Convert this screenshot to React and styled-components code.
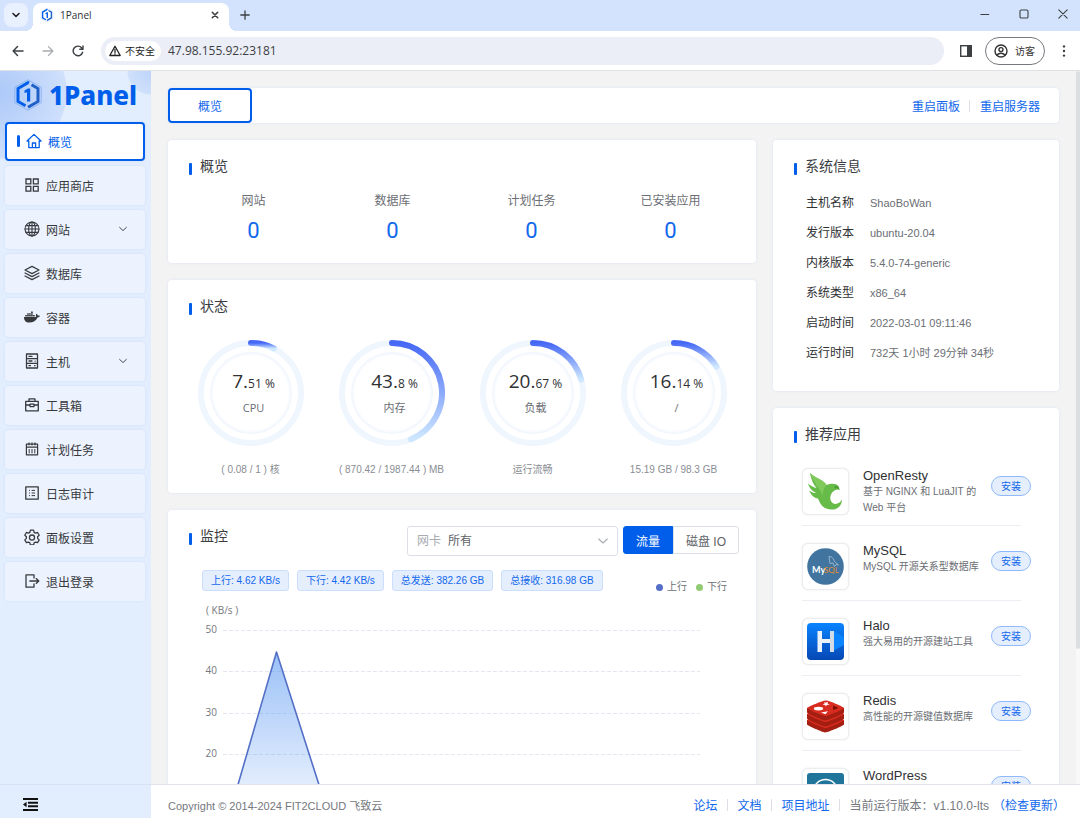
import React, { useState } from 'react';
import styled, { createGlobalStyle, css } from 'styled-components';
import { FaDocker } from 'react-icons/fa';

const GlobalStyle = createGlobalStyle`
    * {
        box-sizing: border-box;
    }
    body {
        margin: 0;
        font-family: "Liberation Sans", "Noto Sans CJK SC", sans-serif;
        font-size: 12px;
        color: #303133;
    }
    button, input, select {
        font-family: inherit;
        margin: 0;
        padding: 0;
        border: none;
        background: none;
    }
    button {
        cursor: pointer;
    }
    a {
        color: #1268ec;
        text-decoration: none;
    }
    h1, h2, h3, p, ul, dl, dd {
        margin: 0;
        padding: 0;
        font-weight: 400;
    }
    ul {
        list-style: none;
    }
    svg {
        display: block;
        flex-shrink: 0;
    }
`;

const line = (width = 1) => ({
    fill: 'none',
    stroke: 'currentColor',
    strokeWidth: width,
    strokeLinecap: 'round',
    strokeLinejoin: 'round',
});

const HomeIcon = () => (
    <svg width="16" height="16" viewBox="0 0 16 16" {...line(1.3)}>
        <path d="M1 8 8 1.4 15 8h-1.8v6.6H2.8V8zM6.4 14.4V10h3.2v4.4" />
    </svg>
);

const GridIcon = () => (
    <svg width="16" height="16" viewBox="0 0 16 16" {...line(1.3)}>
        <path d="M2 2h4.8v4.8H2zM9.4 2h4.8v4.8H9.4zM2 9.4h4.8v4.8H2zM9.4 9.4h4.8v4.8H9.4z" strokeLinejoin="miter" />
    </svg>
);

const GlobeIcon = () => (
    <svg width="16" height="16" viewBox="0 0 16 16" {...line(1.1)}>
        <circle cx="8" cy="8" r="7" />
        <ellipse cx="8" cy="8" rx="3.4" ry="7" />
        <path d="M8 1v14M1 8h14M2 4.6h12M2 11.4h12" />
    </svg>
);

const LayersIcon = () => (
    <svg width="16" height="16" viewBox="0 0 16 16" {...line(1.2)}>
        <path d="M8 1.4 15 5 8 8.6 1 5zM1 8l7 3.6L15 8M1 11l7 3.6 7-3.6" />
    </svg>
);

const HostIcon = () => (
    <svg width="16" height="16" viewBox="0 0 16 16" {...line(1.3)}>
        <path d="M2.5 1h11v14h-11zM2.5 5.7h11M2.5 10.4h11M5 3.4h3M5 8h3M5 12.7h1.5M11 8.1h.2M10.6 12.7h.4" />
    </svg>
);

const ToolboxIcon = () => (
    <svg width="16" height="16" viewBox="0 0 16 16" {...line(1.3)}>
        <path d="M1.7 4.4h12.6v9.4H1.7zM5 4.2V1.9h6v2.3M1.7 8h4.2M10.1 8h4.2M6 7.2h4v2.4H6z" />
    </svg>
);

const CalendarIcon = () => (
    <svg width="16" height="16" viewBox="0 0 16 16" {...line(1.2)}>
        <path d="M2.4 3.2h11.2v10.6H2.4zM2.4 6.2h11.2M5 1.8v2M8 1.8v2M11 1.8v2" />
        <path d="M5.2 8v4.4M8 8v4.4M10.800 8v4.400" strokeWidth="1" strokeLinecap="butt" />
    </svg>
);

const LogIcon = () => (
    <svg width="16" height="16" viewBox="0 0 16 16" {...line(1.3)}>
        <path d="M1.8 1.8h12.4v12.4H1.8z" />
        <path d="M5 5.4h1M7.6 5.4H11M5 8h1M7.6 8H11M5 10.6h1M7.6 10.6H11" strokeWidth="1" strokeLinecap="butt" />
    </svg>
);

const GearIcon = () => (
    <svg width="16" height="16" viewBox="0 0 24 24" {...line(1.9)}>
        <path d="M9.6 1.8h4.8l.8 3.2 2 1.2 3.2-1 2.4 4.2-2.4 2.3v2.4l2.4 2.2-2.4 4.2-3.2-.9-2 1.2-.8 3.1H9.6l-.8-3.1-2-1.2-3.2.9-2.4-4.2 2.4-2.2v-2.4L1.2 9.4l2.4-4.2 3.2 1 2-1.2z" />
        <circle cx="12" cy="12.8" r="3.8" />
    </svg>
);

const LogoutIcon = () => (
    <svg width="16" height="16" viewBox="0 0 16 16" {...line(1.3)}>
        <path d="M10 5V1.8H2v12.4h8V11M5.8 8h9M12.2 5.6 14.8 8l-2.6 2.4" />
    </svg>
);

const ChevronDown = ({ size = 8 }) => (
    <svg width={size} height={size} viewBox="0 0 8 8" {...line(0.9)}>
        <path d="m.6 2.4 3.4 3.2 3.4-3.2" />
    </svg>
);

const PanelMark = ({ size }) => (
    <svg width={size} height={size} viewBox="0 0 32 32">
        <path d="M16 .8 29.200 8.300v15.400L16 31.200 2.800 23.700V8.300z" fill="none" stroke="#7eabf2" strokeWidth=".8" />
        <path d="M19.500 5.700 26 9.500v13L16 28.300" fill="none" stroke="#1f5fc8" strokeWidth="3" />
        <path d="M17 4.200 16 3.700 6 9.500v13l7.500 4.300" fill="none" stroke="#005eeb" strokeWidth="3" />
        <path d="M12.500 11.600 16 9.600h2.200v13h-3.200v-9.400l-2.500.8z" fill="#005eeb" />
    </svg>
);

// ---------- browser window ----------

const Window = styled.div`
    height: 100vh;
    display: flex;
    flex-direction: column;
    overflow: hidden;
    background: #f3f3f4;
`;

const TabStrip = styled.div`
    height: 31px;
    flex-shrink: 0;
    display: flex;
    align-items: center;
    padding: 0 10px 0 4px;
    background: #d3e3fd;
    color: #303336;
`;

const TabMenuButton = styled.button`
    display: grid;
    place-items: center;
    width: 24px;
    height: 24px;
    margin-right: 5px;
    margin-bottom: 2px;
    border-radius: 8px;
    background: #e9f0fe;
    color: #222;
`;

const BrowserTab = styled.div`
    position: relative;
    align-self: flex-end;
    display: flex;
    align-items: center;
    gap: 6px;
    width: 196px;
    height: 28px;
    padding: 0 8px 4px 7px;
    border-radius: 8px 8px 0 0;
    background: #fff;
    font-family: "Open Sans", sans-serif;
    font-size: 10px;

    &::before, &::after {
        content: '';
        position: absolute;
        bottom: 0;
        width: 8px;
        height: 8px;
    }
    &::before {
        left: -8px;
        background: radial-gradient(circle at 0 0, transparent 8px, #fff 8px);
    }
    &::after {
        right: -8px;
        background: radial-gradient(circle at 100% 0, transparent 8px, #fff 8px);
    }
    span {
        flex: 1;
    }
`;

const IconButton = styled.button`
    display: grid;
    place-items: center;
    width: ${({ $width }) => $width || 12}px;
    height: 24px;
    color: ${({ $muted }) => ($muted ? '#a8abaf' : '#3c4043')};
`;

const NewTab = styled(IconButton)`
    margin-left: 10px;
    margin-bottom: 2px;
`;

const WindowControls = styled.div`
    display: flex;
    gap: 25px;
    margin-left: auto;
    padding-bottom: 4px;
`;

const Toolbar = styled.div`
    height: 40px;
    flex-shrink: 0;
    display: flex;
    align-items: center;
    padding: 0 10px;
    background: #fff;
    border-bottom: 1px solid #dfe1e5;
    color: #3c4043;
`;

const NavButtons = styled.div`
    display: flex;
    gap: 14px;
    margin-right: 15px;
`;

const AddressBar = styled.div`
    flex: 1;
    display: flex;
    align-items: center;
    gap: 7px;
    height: 28px;
    padding: 0 4px;
    border-radius: 14px;
    background: #ebeef7;
`;

const SecurityChip = styled.button`
    display: flex;
    align-items: center;
    gap: 4px;
    height: 20px;
    padding: 0 6px 0 4px;
    border-radius: 10px;
    background: #fff;
    color: #222;
    font-size: 10px;
`;

const AddressInput = styled.input`
    flex: 1;
    min-width: 0;
    outline: none;
    color: #3c4043;
    font-family: "Open Sans", sans-serif;
    font-size: 12px;
`;

const ToolbarEnd = styled.div`
    display: flex;
    align-items: center;
    gap: 13px;
    margin-left: 16px;
`;

const GuestButton = styled.button`
    display: flex;
    align-items: center;
    gap: 7px;
    width: 60px;
    height: 28px;
    padding-left: 8px;
    border: 1px solid #75797e;
    border-radius: 14px;
    color: #333;
    font-size: 10px;
`;

// ---------- shell ----------

const Shell = styled.div`
    flex: 1;
    min-height: 0;
    display: flex;
`;

const Sidebar = styled.aside`
    width: 151px;
    flex-shrink: 0;
    display: flex;
    flex-direction: column;
    background:
        radial-gradient(circle at 151px 0, #bdd4fa 0, #cfe0fb 23px, transparent 24px),
        radial-gradient(circle at 0 21px, #adc9f8 0, #cfe0fc 66px, transparent 67px),
        #e2edfd;
`;

const Brand = styled.a`
    display: flex;
    align-items: center;
    gap: 5px;
    height: 51px;
    padding: 0 0 4px 12px;
    color: #005eeb;
    font-family: "Noto Sans", sans-serif;
    font-size: 26px;
    font-weight: 800;
    line-height: 32px;
`;

const Menu = styled.ul`
    display: flex;
    flex-direction: column;
    gap: 5px;
    padding: 0 6px 0 5px;
`;

const MenuButton = styled.button`
    display: flex;
    align-items: center;
    gap: 6px;
    width: 100%;
    height: 39px;
    padding: 0 18px 1px 19px;
    border-radius: 4px;
    background: #ecf3fe;
    box-shadow: 0 0 3px rgba(0, 94, 235, 0.08);
    color: #37393d;
    font-size: 12px;
    text-align: left;

    span {
        flex: 1;
    }

    ${({ $active }) => $active && css`
        padding-left: 10px;
        border: 2px solid #005eeb;
        background: #fff;
        color: #005eeb;

        &::before {
            content: '';
            width: 3px;
            height: 12px;
            border-radius: 2px;
            background: #005eeb;
        }
    `}
`;

const SidebarFoot = styled.div`
    height: 34px;
    margin-top: auto;
    padding: 13px 22px 0;
    border-top: 1px solid #d6e2f5;

    button {
        color: #111;
    }
`;

const Page = styled.div`
    flex: 1;
    min-width: 0;
    display: flex;
    flex-direction: column;
`;

const ScrollArea = styled.div`
    flex: 1;
    min-height: 0;
    display: flex;
`;

const Content = styled.main`
    flex: 1;
    min-width: 0;
    padding: 17px;
    overflow-y: auto;
    scrollbar-width: none;
`;

const ScrollTrack = styled.div`
    width: 4px;
    background: #f9f9fa;

    &::before {
        content: '';
        display: block;
        height: 81%;
        border-radius: 2px;
        background: #dddee0;
    }
`;

const surface = css`
    border-radius: 4px;
    background: #fff;
    box-shadow: 0 0 3px rgba(0, 94, 235, 0.1);
`;

const RouteBar = styled.nav`
    ${surface}
    display: flex;
    align-items: center;
    height: 35px;
    margin-bottom: 17px;
    padding-right: 19px;
`;

const RouteButton = styled.button`
    width: 84px;
    height: 35px;
    margin-right: auto;
    border: 2px solid #005eeb;
    border-radius: 4px;
    background: #fff;
    color: #1268ec;
    font-size: 12px;
`;

const Divider = styled.span`
    width: 1px;
    height: 12px;
    margin: 0 10px 0 9px;
    background: #dcdfe6;
`;

const Columns = styled.div`
    display: grid;
    grid-template-columns: minmax(0, 1fr) 286px;
    gap: 17px;
    align-items: start;
`;

const Column = styled.div`
    display: flex;
    flex-direction: column;
    gap: 17px;
`;

const Card = styled.section`
    ${surface}
    padding-top: 16px;
`;

const CardTitle = styled.h2`
    display: flex;
    align-items: center;
    gap: 8px;
    height: 22px;
    padding-left: 21px;
    color: #3b3d42;
    font-size: 14px;
    line-height: 20px;
    padding-bottom: 2px;

    &::before {
        content: '';
        width: 3px;
        height: 12px;
        margin-top: 5px;
        border-radius: 1px;
        background: #005eeb;
    }
`;

// ---------- overview ----------

const Counters = styled.dl`
    display: grid;
    grid-template-columns: repeat(4, 1fr);
    padding: 13px 16px 12px;
    text-align: center;

    dt {
        color: #6b6e74;
        line-height: 20px;
    }
    dd {
        color: #1268ec;
        font-family: Roboto, sans-serif;
        font-size: 22px;
        line-height: 40px;
    }
`;

// ---------- status ----------

const Gauges = styled.div`
    display: grid;
    grid-template-columns: repeat(4, 1fr);
    justify-items: center;
    padding: 22px 12px 13px;
`;

const Gauge = styled.div`
    display: grid;
    justify-items: center;
    row-gap: 14px;

    > svg, > div {
        grid-area: 1 / 1;
    }
`;

const GaugeText = styled.div`
    align-self: center;
    padding: 0 0 2px 6px;
    color: #6b6e74;
    font-family: "Open Sans", "Noto Sans CJK SC", sans-serif;
    font-size: 11px;
    line-height: 20px;
    text-align: center;

    p {
        color: #303133;
        font-size: 12px;
        line-height: 28px;
    }
    strong {
        font-size: 19px;
        font-weight: 400;
    }
`;

const GaugeNote = styled.p`
    grid-area: 2 / 1;
    color: #8a8d93;
    font-size: 10px;
    line-height: 20px;
`;

// ---------- monitor ----------

const MonitorHeader = styled.div`
    display: flex;
    align-items: flex-start;
    padding-right: 17px;

    h2 {
        margin-right: auto;
    }
`;

const SelectBox = styled.label`
    display: flex;
    align-items: center;
    gap: 7px;
    width: 211px;
    height: 30px;
    margin-right: 5px;
    padding: 0 9px;
    border: 1px solid #dcdfe6;
    border-radius: 3px;
    color: #a8abb2;
    line-height: 28px;

    select {
        flex: 1;
        height: 28px;
        appearance: none;
        outline: none;
        color: #606266;
        font-size: 12px;
        line-height: 28px;
    }
`;

const ModeButton = styled.button`
    height: 28px;
    padding: 0 12px;
    border: 1px solid ${({ $on }) => ($on ? '#005eeb' : '#dcdfe6')};
    border-radius: ${({ $first }) => ($first ? '3px 0 0 3px' : '0 3px 3px 0')};
    background: ${({ $on }) => ($on ? '#005eeb' : '#fff')};
    color: ${({ $on }) => ($on ? '#fff' : '#606266')};
    font-size: 12px;
`;

const TagRow = styled.div`
    display: flex;
    align-items: flex-start;
    gap: 8px;
    padding: 14px 29px 0 34px;
`;

const Tag = styled.span`
    height: 21px;
    padding: 0 8px;
    border: 1px solid #cbdefb;
    border-radius: 3px;
    background: #e5eefd;
    color: #1268ec;
    font-size: 10px;
    line-height: 19px;
    white-space: nowrap;
`;

const Legend = styled.ul`
    display: flex;
    gap: 9px;
    margin: 10px 0 0 auto;
    color: #6b6e74;
    font-size: 10px;
    line-height: 14px;
`;

const LegendItem = styled.li`
    display: flex;
    align-items: center;
    gap: 4px;

    &::before {
        content: '';
        width: 7px;
        height: 7px;
        border-radius: 50%;
        background: ${({ $color }) => $color};
    }
`;

const ChartBox = styled.div`
    padding: 0 54px 16px 34px;

    svg {
        width: 100%;
        height: auto;
    }
    text {
        fill: #75787e;
        font-family: "Open Sans", sans-serif;
        font-size: 10px;
    }
`;

// ---------- side cards ----------

const InfoList = styled.dl`
    display: grid;
    grid-template-columns: 48px 1fr;
    column-gap: 16px;
    padding: 10px 0 23px 33px;
    line-height: 30px;

    dt {
        color: #303133;
    }
    dd {
        color: #6b6e74;
        font-size: 11px;
    }
`;

const AppList = styled.ul`
    padding: 5px 38px 16px 29px;
`;

const AppItem = styled.li`
    display: flex;
    align-items: flex-start;
    padding: 17px 0 10px;
    border-bottom: 1px solid #ebeef2;
`;

const AppLogo = styled.div`
    display: grid;
    place-items: center;
    width: 47px;
    height: 47px;
    border: 1px solid #ecedf0;
    border-radius: 6px;
    box-shadow: 0 0 2px rgba(0, 0, 0, 0.1);
    background: #fff;
`;

const AppText = styled.div`
    flex: 1;
    min-width: 0;
    height: 47px;
    padding: 0 9px 0 14px;

    h3 {
        color: #303133;
        font-size: 13px;
        line-height: 16px;
    }
    p {
        color: #6b6e74;
        font-size: 10px;
        line-height: 16px;
    }
`;

const InstallButton = styled.button`
    width: 40px;
    height: 20px;
    margin: 8px -10px 0 0;
    padding-bottom: 1px;
    border: 1px solid #8fb9f8;
    border-radius: 10px;
    background: #e5eefd;
    color: #1268ec;
    font-size: 10px;
`;

const Footer = styled.footer`
    display: flex;
    align-items: center;
    height: 34px;
    flex-shrink: 0;
    padding: 6px 15px 0 17px;
    border-top: 1px solid #e1e4ea;
    background: #fff;
    color: #75787e;
    white-space: nowrap;

    small {
        margin-right: auto;
        font-size: 11px;
    }
    p {
        margin-right: 4px;
    }
`;

const menu = [
    { name: '概览', icon: <HomeIcon /> },
    { name: '应用商店', icon: <GridIcon /> },
    { name: '网站', icon: <GlobeIcon />, children: true },
    { name: '数据库', icon: <LayersIcon /> },
    { name: '容器', icon: <FaDocker size={16} /> },
    { name: '主机', icon: <HostIcon />, children: true },
    { name: '工具箱', icon: <ToolboxIcon /> },
    { name: '计划任务', icon: <CalendarIcon /> },
    { name: '日志审计', icon: <LogIcon /> },
    { name: '面板设置', icon: <GearIcon /> },
    { name: '退出登录', icon: <LogoutIcon /> },
];

const counters = [
    ['网站', 0],
    ['数据库', 0],
    ['计划任务', 0],
    ['已安装应用', 0],
];

const gauges = [
    { label: 'CPU', value: '7.51', note: '( 0.08 / 1 ) 核' },
    { label: '内存', value: '43.8', note: '( 870.42 / 1987.44 ) MB' },
    { label: '负载', value: '20.67', note: '运行流畅' },
    { label: '/', value: '16.14', note: '15.19 GB / 98.3 GB' },
];

const info = [
    ['主机名称', 'ShaoBoWan'],
    ['发行版本', 'ubuntu-20.04'],
    ['内核版本', '5.4.0-74-generic'],
    ['系统类型', 'x86_64'],
    ['启动时间', '2022-03-01 09:11:46'],
    ['运行时间', '732天 1小时 29分钟 34秒'],
];

const traffic = ['上行: 4.62 KB/s', '下行: 4.42 KB/s', '总发送: 382.26 GB', '总接收: 316.98 GB'];

const OpenRestyLogo = () => (
    <svg width="37" height="37" viewBox="0 0 37 37">
        <path d="M3 0C8 5 17 7 19.500 12 24 10 30 10 32 14l.5 3-1.500-.5C26 17 22.500 21 23.500 27c2 5.500 8.500 5 11.500-.5C35 32 31 37 24 36.500 15 36 13 30 11 25.500 7 25 4 22 2 17.500c3 2 4.500 2.500 7 2.500C5 18 2 15 1 10.500c3 2.500 6 4 8.500 4.500C6 11 4 6 3 0z" fill="#67bb48" />
        <path d="M3 0C8 5 17 7 19.500 12c-3 3-4 7-3.500 11C13 16 7 10 3 0z" fill="#7fca5b" />
        <path d="M28 12.500c2 0 4 1.500 4.500 4.500-1.500-1.500-3-2-5-1.500z" fill="#4a9b34" />
    </svg>
);

const MySqlLogo = () => (
    <svg width="37" height="37" viewBox="0 0 37 37">
        <circle cx="18.500" cy="18.500" r="18.300" fill="#41759f" />
        <path d="M22 8.500c4 0 4.500 3 5.500 5l4 3.500-2.500-.5-1.500 2-1.500-3.500-3 .5z" fill="none" stroke="#b7cede" strokeWidth=".7" />
        <text x="5" y="25" fill="#fff" fontSize="9" fontFamily="Lato, sans-serif" fontWeight="700">My</text>
        <text x="17" y="25" fill="#e48e2d" fontSize="8" fontFamily="Lato, sans-serif" fontWeight="400">SQL</text>
    </svg>
);

const HaloLogo = () => (
    <svg width="37" height="37" viewBox="0 0 37 37">
        <defs>
            <linearGradient id="halo" x1="0" y1="0" x2="0" y2="1">
                <stop offset="0" stopColor="#0a84ff" />
                <stop offset="1" stopColor="#0648b5" />
            </linearGradient>
        </defs>
        <rect width="37" height="37" rx="4" fill="url(#halo)" />
        <path d="M27 8l10 6v8l-11 6z" fill="#0a84ff" />
        <path d="M10.500 8H15v8h8V8h4v21h-4v-9h-8v9h-4.500z" fill="#edf3fb" />
        <path d="M23 8h4v21h-4z" fill="#d3dbe6" />
    </svg>
);

const RedisLogo = () => (
    <svg width="37" height="37" viewBox="0 0 37 37">
        {[12, 6, 0].map((y) => (
            <g key={y} transform={`translate(0 ${y})`}>
                <path d="M0 10v4.500c0 1 15 7.500 18 8C22 22 37 15.500 37 14.500V10z" fill="#a41e11" />
                <path d="M0 10C0 9 16 2.500 19 2.500S37 9 37 10 21 18 18.500 18 0 11 0 10z" fill="#d82c20" />
            </g>
        ))}
        <ellipse cx="11.500" cy="10.600" rx="4.700" ry="1.900" fill="#fff" />
        <path d="m14 14.500 7-1.200-2.500 3zM17 4l1.600.7 2.600-.9-.8 1.800 2.400 1-3 .3-.9 1.500-.8-1.500-2.600-.5 2.200-.8z" fill="#fff" />
        <path d="m26 7.500 5.500 2.500-5.500 2z" fill="#7a0c00" />
    </svg>
);

const WordPressLogo = () => (
    <svg width="37" height="37" viewBox="0 0 37 37">
        <rect width="37" height="37" rx="3" fill="#21759b" />
        <circle cx="18.500" cy="18.500" r="12" fill="none" stroke="#fff" strokeWidth="1.500" />
        <path d="m10 14 6 14 3-8-2-6m3 0 5 14 3-10" fill="none" stroke="#fff" strokeWidth="2" />
    </svg>
);

const apps = [
    { name: 'OpenResty', desc: '基于 NGINX 和 LuaJIT 的 Web 平台', logo: <OpenRestyLogo /> },
    { name: 'MySQL', desc: 'MySQL 开源关系型数据库', logo: <MySqlLogo /> },
    { name: 'Halo', desc: '强大易用的开源建站工具', logo: <HaloLogo /> },
    { name: 'Redis', desc: '高性能的开源键值数据库', logo: <RedisLogo /> },
    { name: 'WordPress', desc: '', logo: <WordPressLogo /> },
];

function GaugeRing({ percent, id }) {
    const angle = (percent / 100) * Math.PI * 2;
    const x = 53 + 50 * Math.sin(angle);
    const y = 53 - 50 * Math.cos(angle);

    return (
        <svg width="106" height="106" viewBox="0 0 106 106" fill="none">
            <defs>
                <linearGradient id={id} x1="0" y1="0" x2="0" y2="1">
                    <stop offset="0" stopColor="#4668f5" />
                    <stop offset="1" stopColor="#cfe8ff" />
                </linearGradient>
                <radialGradient id={`${id}-in`}>
                    <stop offset="0.9" stopColor="#fff" />
                    <stop offset="1" stopColor="#eff5fd" />
                </radialGradient>
            </defs>
            <circle cx="53" cy="53" r="50" stroke="#f0f6fe" strokeWidth="6" />
            <circle cx="53" cy="53" r="41" fill={`url(#${id}-in)`} />
            <path
                d={`M53 3A50 50 0 ${percent > 50 ? 1 : 0} 1 ${x} ${y}`}
                stroke={`url(#${id})`}
                strokeWidth="6"
                strokeLinecap="round"
            />
        </svg>
    );
}

function BrowserChrome() {
    const [url, setUrl] = useState('47.98.155.92:23181');

    return (
        <>
            <TabStrip>
                <TabMenuButton aria-label="搜索标签页">
                    <svg width="8" height="8" viewBox="0 0 8 8" {...line(1.6)}><path d="m1 2.500 3 3 3-3" /></svg>
                </TabMenuButton>
                <BrowserTab>
                    <PanelMark size={14} />
                    <span>1Panel</span>
                    <IconButton aria-label="关闭标签页">
                        <svg width="8" height="8" viewBox="0 0 8 8" {...line(1.6)}><path d="m1.300 1.300 5.400 5.400M6.700 1.300 1.300 6.700" /></svg>
                    </IconButton>
                </BrowserTab>
                <NewTab aria-label="新标签页">
                    <svg width="10" height="10" viewBox="0 0 10 10" {...line(1.3)}><path d="M5 .8v8.400M.8 5h8.400" /></svg>
                </NewTab>
                <WindowControls>
                    <IconButton $width={14} aria-label="最小化">
                        <svg width="10" height="10" viewBox="0 0 10 10" {...line(1)}><path d="M.8 5.500h8" /></svg>
                    </IconButton>
                    <IconButton $width={14} aria-label="最大化">
                        <svg width="10" height="10" viewBox="0 0 10 10" {...line(1.1)}><rect x="1" y="1" width="8" height="8" rx="1.300" /></svg>
                    </IconButton>
                    <IconButton $width={14} aria-label="关闭">
                        <svg width="10" height="10" viewBox="0 0 10 10" {...line(1.1)}><path d="m.8.8 8.400 8.400M9.200.8.8 9.200" /></svg>
                    </IconButton>
                </WindowControls>
            </TabStrip>
            <Toolbar>
                <NavButtons>
                    <IconButton $width={16} aria-label="后退">
                        <svg width="12" height="12" viewBox="0 0 12 12" {...line(1.5)}><path d="M11 6H1.500M5.500 1.600 1.200 6l4.300 4.400" /></svg>
                    </IconButton>
                    <IconButton $width={16} $muted aria-label="前进">
                        <svg width="12" height="12" viewBox="0 0 12 12" {...line(1.3)}><path d="M1 6h9.500M6.500 1.600 10.800 6l-4.300 4.400" /></svg>
                    </IconButton>
                    <IconButton $width={16} aria-label="重新加载">
                        <svg width="12" height="12" viewBox="0 0 12 12" {...line(1.4)}><path d="M10.600 7.200A4.800 4.800 0 1 1 9.600 2.800L10.800 4M11 1v3.200H7.800" /></svg>
                    </IconButton>
                </NavButtons>
                <AddressBar>
                    <SecurityChip>
                        <svg width="12" height="12" viewBox="0 0 12 12" {...line(1.3)}><path d="M6 1.300 11.200 10.500H.8zM6 4.500v3M6 9v.1" /></svg>
                        不安全
                    </SecurityChip>
                    <AddressInput aria-label="地址" value={url} onChange={(e) => setUrl(e.target.value)} />
                </AddressBar>
                <ToolbarEnd>
                    <IconButton aria-label="侧边栏">
                        <svg width="12" height="12" viewBox="0 0 12 12">
                            <rect x=".7" y=".7" width="10.600" height="10.600" fill="none" stroke="currentColor" strokeWidth="1.400" />
                            <path d="M7 1h4v10H7z" fill="currentColor" />
                        </svg>
                    </IconButton>
                    <GuestButton>
                        <svg width="14" height="14" viewBox="0 0 14 14" {...line(1.4)}>
                            <circle cx="7" cy="7" r="6" />
                            <circle cx="7" cy="5.600" r="2" />
                            <path d="M3 11c2-2.400 6-2.400 8 0" />
                        </svg>
                        访客
                    </GuestButton>
                    <IconButton aria-label="更多">
                        <svg width="12" height="12" viewBox="0 0 12 12" fill="currentColor">
                            <circle cx="6" cy="1.400" r="1.200" />
                            <circle cx="6" cy="6" r="1.200" />
                            <circle cx="6" cy="10.600" r="1.200" />
                        </svg>
                    </IconButton>
                </ToolbarEnd>
            </Toolbar>
        </>
    );
}

function TrafficChart() {
    const rows = [[50, 36], [40, 77], [30, 119], [20, 160]];

    return (
        <ChartBox>
            <svg viewBox="0 0 500 250" role="img" aria-label="流量">
                <defs>
                    <linearGradient id="area" x1="0" y1="0" x2="0" y2="1">
                        <stop offset="0" stopColor="#5c9af2" stopOpacity=".62" />
                        <stop offset="1" stopColor="#5c9af2" stopOpacity="0" />
                    </linearGradient>
                </defs>
                <text x="4" y="20">( KB/s )</text>
                {rows.map(([label, y]) => (
                    <g key={label}>
                        <text x="15" y={y + 3} textAnchor="end">{label}</text>
                        <path d={`M21 ${y}.500H498`} stroke="#e3e6ee" strokeDasharray="4 2" />
                    </g>
                ))}
                <path d="M20.500 244 74.500 58 134 244z" fill="url(#area)" />
                <path d="M20.500 244 74.500 58 134 244" fill="none" stroke="#5470c6" strokeWidth="1.600" strokeLinejoin="round" />
            </svg>
        </ChartBox>
    );
}

function App() {
    const [active, setActive] = useState('概览');
    const [mode, setMode] = useState('流量');
    const [network, setNetwork] = useState('all');

    return (
        <Window>
            <GlobalStyle />
            <BrowserChrome />
            <Shell>
                <Sidebar>
                    <Brand href="#">
                        <PanelMark size={32} />
                        1Panel
                    </Brand>
                    <Menu>
                        {menu.map((item) => (
                            <li key={item.name}>
                                <MenuButton $active={active === item.name} onClick={() => setActive(item.name)}>
                                    {item.icon}
                                    <span>{item.name}</span>
                                    {item.children && <ChevronDown />}
                                </MenuButton>
                            </li>
                        ))}
                    </Menu>
                    <SidebarFoot>
                        <button aria-label="收起菜单">
                            <svg width="17" height="13" viewBox="0 0 17 13" fill="currentColor">
                                <path d="M1 0h15v2H1zM6 3.700h10v2H6zM6 7.300h10v2H6zM1 11h15v2H1zM1 6.500l3.600-2.700v5.400z" />
                            </svg>
                        </button>
                    </SidebarFoot>
                </Sidebar>
                <Page>
                    <ScrollArea>
                        <Content>
                            <RouteBar>
                                <RouteButton>概览</RouteButton>
                                <a href="#">重启面板</a>
                                <Divider />
                                <a href="#">重启服务器</a>
                            </RouteBar>
                            <Columns>
                                <Column>
                                    <Card>
                                        <CardTitle>概览</CardTitle>
                                        <Counters>
                                            {counters.map(([name, count]) => (
                                                <div key={name}>
                                                    <dt>{name}</dt>
                                                    <dd>{count}</dd>
                                                </div>
                                            ))}
                                        </Counters>
                                    </Card>
                                    <Card>
                                        <CardTitle>状态</CardTitle>
                                        <Gauges>
                                            {gauges.map((g, i) => {
                                                const [whole, rest] = g.value.split('.');
                                                return (
                                                    <Gauge key={g.label}>
                                                        <GaugeRing percent={Number(g.value)} id={`ring${i}`} />
                                                        <GaugeText>
                                                            <p><strong>{whole}.</strong>{rest} %</p>
                                                            {g.label}
                                                        </GaugeText>
                                                        <GaugeNote>{g.note}</GaugeNote>
                                                    </Gauge>
                                                );
                                            })}
                                        </Gauges>
                                    </Card>
                                    <Card>
                                        <MonitorHeader>
                                            <CardTitle>监控</CardTitle>
                                            <SelectBox>
                                                网卡
                                                <select value={network} onChange={(e) => setNetwork(e.target.value)}>
                                                    <option value="all">所有</option>
                                                </select>
                                                <ChevronDown size={10} />
                                            </SelectBox>
                                            <ModeButton $first $on={mode === '流量'} onClick={() => setMode('流量')}>流量</ModeButton>
                                            <ModeButton $on={mode === '磁盘 IO'} onClick={() => setMode('磁盘 IO')}>磁盘 IO</ModeButton>
                                        </MonitorHeader>
                                        <TagRow>
                                            {traffic.map((t) => <Tag key={t}>{t}</Tag>)}
                                            <Legend>
                                                <LegendItem $color="#5470c6">上行</LegendItem>
                                                <LegendItem $color="#91cc75">下行</LegendItem>
                                            </Legend>
                                        </TagRow>
                                        <TrafficChart />
                                    </Card>
                                </Column>
                                <Column>
                                    <Card>
                                        <CardTitle>系统信息</CardTitle>
                                        <InfoList>
                                            {info.map(([name, value]) => (
                                                <React.Fragment key={name}>
                                                    <dt>{name}</dt>
                                                    <dd>{value}</dd>
                                                </React.Fragment>
                                            ))}
                                        </InfoList>
                                    </Card>
                                    <Card>
                                        <CardTitle>推荐应用</CardTitle>
                                        <AppList>
                                            {apps.map((app) => (
                                                <AppItem key={app.name}>
                                                    <AppLogo>{app.logo}</AppLogo>
                                                    <AppText>
                                                        <h3>{app.name}</h3>
                                                        {app.desc && <p>{app.desc}</p>}
                                                    </AppText>
                                                    <InstallButton>安装</InstallButton>
                                                </AppItem>
                                            ))}
                                        </AppList>
                                    </Card>
                                </Column>
                            </Columns>
                        </Content>
                        <ScrollTrack />
                    </ScrollArea>
                    <Footer>
                        <small>Copyright © 2014-2024 FIT2CLOUD 飞致云</small>
                        <a href="#">论坛</a>
                        <Divider />
                        <a href="#">文档</a>
                        <Divider />
                        <a href="#">项目地址</a>
                        <Divider />
                        <p>当前运行版本：v1.10.0-lts</p>
                        <a href="#">（检查更新）</a>
                    </Footer>
                </Page>
            </Shell>
        </Window>
    );
}

export default App;
